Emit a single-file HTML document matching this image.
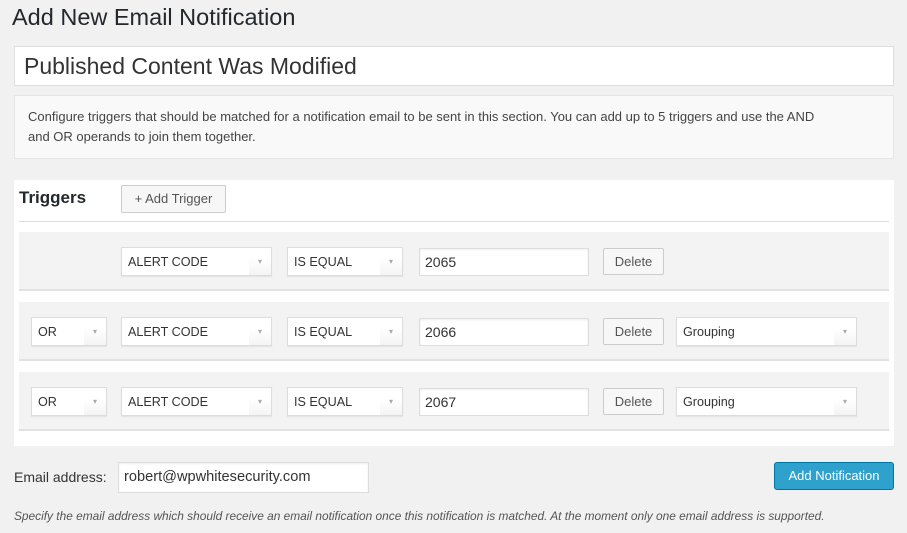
<!DOCTYPE html>
<html><head><style>
*{box-sizing:border-box;margin:0;padding:0}
body{width:907px;height:533px;background:#f1f1f1;font-family:"Liberation Sans",sans-serif;color:#333;position:relative;overflow:hidden}
.a{position:absolute}
.sel{position:absolute;height:29px;background:#fff;border:1px solid #ddd;box-shadow:0 1px 1px rgba(0,0,0,.08);font-size:12.6px;line-height:28px;padding-left:6px;color:#333}
.sel:after{content:"▾";position:absolute;right:0;top:0;width:22px;height:27px;line-height:27px;text-align:center;color:#aaa;font-size:8px;background:linear-gradient(#fff 40%,#f4f4f4)}
.inp{position:absolute;height:28px;background:#fff;border:1px solid #ddd;font-size:14px;line-height:26px;padding-left:5px;color:#333;box-shadow:inset 0 1px 2px rgba(0,0,0,.07)}
.btn{position:absolute;height:28px;background:#f7f7f7;border:1px solid #ccc;font-size:13px;line-height:26px;text-align:center;color:#555;border-radius:2px}
.row{position:absolute;left:19px;width:870px;height:59px;background:#f3f3f3;border-bottom:2px solid #e2e2e2}
</style></head><body>
<div class="a" style="left:12px;top:4px;font-size:23.5px;color:#23282d">Add New Email Notification</div>
<div class="a" style="left:14px;top:46px;width:880px;height:40px;background:#fff;border:1px solid #ddd;font-size:23px;line-height:38px;padding-left:9px;color:#333">Published Content Was Modified</div>
<div class="a" style="left:14px;top:95px;width:880px;height:64px;background:#f9f9f9;border:1px solid #e5e5e5;font-size:13px;line-height:20px;padding:11px 60px 11px 13px;color:#444">Configure triggers that should be matched for a notification email to be sent in this section. You can add up to 5 triggers and use the AND and OR operands to join them together.</div>
<div class="a" style="left:14px;top:180px;width:880px;height:266px;background:#fff"></div>
<div class="a" style="left:19px;top:188px;font-size:17px;font-weight:bold;color:#23282d">Triggers</div>
<div class="btn" style="left:121px;top:185px;width:105px">+ Add Trigger</div>
<div class="a" style="left:19px;top:221px;width:870px;height:1px;background:#ddd"></div>

<div class="row" style="top:232px"></div>
<div class="sel" style="left:121px;top:247px;width:151px">ALERT CODE</div>
<div class="sel" style="left:287px;top:247px;width:116px">IS EQUAL</div>
<div class="inp" style="left:419px;top:248px;width:170px">2065</div>
<div class="btn" style="left:603px;top:248px;width:61px;height:27px">Delete</div>

<div class="row" style="top:302px"></div>
<div class="sel" style="left:31px;top:317px;width:76px">OR</div>
<div class="sel" style="left:121px;top:317px;width:151px">ALERT CODE</div>
<div class="sel" style="left:287px;top:317px;width:116px">IS EQUAL</div>
<div class="inp" style="left:419px;top:318px;width:170px">2066</div>
<div class="btn" style="left:603px;top:318px;width:61px;height:27px">Delete</div>
<div class="sel" style="left:676px;top:317px;width:181px">Grouping</div>

<div class="row" style="top:372px"></div>
<div class="sel" style="left:31px;top:387px;width:76px">OR</div>
<div class="sel" style="left:121px;top:387px;width:151px">ALERT CODE</div>
<div class="sel" style="left:287px;top:387px;width:116px">IS EQUAL</div>
<div class="inp" style="left:419px;top:388px;width:170px">2067</div>
<div class="btn" style="left:603px;top:388px;width:61px;height:27px">Delete</div>
<div class="sel" style="left:676px;top:387px;width:181px">Grouping</div>

<div class="a" style="left:14px;top:469px;font-size:14px;color:#333">Email address:</div>
<div class="inp" style="left:118px;top:462px;width:251px;height:31px;line-height:29px;font-size:14.6px">robert@wpwhitesecurity.com</div>
<div class="a" style="left:774px;top:462px;width:120px;height:28px;background:#2ea2cc;border:1px solid #0074a2;border-radius:3px;color:#fff;font-size:13px;line-height:26px;text-align:center">Add Notification</div>
<div class="a" style="left:14px;top:509px;font-size:11.9px;font-style:italic;color:#555;white-space:nowrap">Specify the email address which should receive an email notification once this notification is matched. At the moment only one email address is supported.</div>
</body></html>
